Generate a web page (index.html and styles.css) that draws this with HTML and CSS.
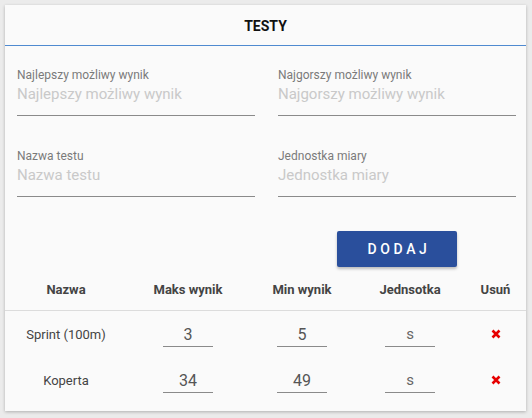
FILE: index.html
```html
<!DOCTYPE html>
<html lang="pl">
<head>
<meta charset="utf-8">
<title>Testy</title>
<link rel="stylesheet" href="styles.css">
</head>
<body>
<div class="card">
  <div class="card-header">TESTY</div>
  <div class="form">
    <div class="field">
      <label class="label">Najlepszy możliwy wynik</label>
      <input class="input" placeholder="Najlepszy możliwy wynik">
    </div>
    <div class="field">
      <label class="label">Najgorszy możliwy wynik</label>
      <input class="input" placeholder="Najgorszy możliwy wynik">
    </div>
    <div class="field">
      <label class="label">Nazwa testu</label>
      <input class="input" placeholder="Nazwa testu">
    </div>
    <div class="field">
      <label class="label">Jednostka miary</label>
      <input class="input" placeholder="Jednostka miary">
    </div>
    <div class="btn-cell">
      <button class="btn">DODAJ</button>
    </div>
  </div>
  <div class="table">
    <div class="row head">
      <div class="cell">Nazwa</div>
      <div class="cell">Maks wynik</div>
      <div class="cell">Min wynik</div>
      <div class="cell">Jednsotka</div>
      <div class="cell">Usuń</div>
    </div>
    <div class="row">
      <div class="cell">Sprint (100m)</div>
      <div class="cell"><input class="small" value="3"></div>
      <div class="cell"><input class="small" value="5"></div>
      <div class="cell"><input class="small unit" value="s"></div>
      <div class="cell"><svg class="del" width="10" height="10" viewBox="0 0 10 10"><path d="M1.5 1.5L8.5 8.5M8.5 1.5L1.5 8.5" stroke="#e60000" stroke-width="2.6" stroke-linecap="butt"/></svg></div>
    </div>
    <div class="row">
      <div class="cell">Koperta</div>
      <div class="cell"><input class="small" value="34"></div>
      <div class="cell"><input class="small" value="49"></div>
      <div class="cell"><input class="small unit" value="s"></div>
      <div class="cell"><svg class="del" width="10" height="10" viewBox="0 0 10 10"><path d="M1.5 1.5L8.5 8.5M8.5 1.5L1.5 8.5" stroke="#e60000" stroke-width="2.6" stroke-linecap="butt"/></svg></div>
    </div>
  </div>
</div>
</body>
</html>
```
FILE: styles.css
```css
html, body {
  margin: 0;
  padding: 0;
}
body {
  background: #ebebeb;
  font-family: Roboto, "Liberation Sans", sans-serif;
  padding: 5px 6px 7px 5px;
}
.card {
  background: #fafafa;
  width: 521px;
  height: 406px;
  box-shadow: 0 1px 3px rgba(0,0,0,0.25);
  box-sizing: border-box;
}
.card-header {
  height: 40px;
  line-height: 42px;
  text-align: center;
  font-weight: 700;
  font-size: 14px;
  color: #111;
  border-bottom: 1px solid #4f8ad0;
}
.form {
  display: grid;
  grid-template-columns: 238px 238px;
  column-gap: 23px;
  row-gap: 32px;
  padding: 21px 0 0 12px;
}
.field {
  display: flex;
  flex-direction: column;
}
.label {
  font-size: 12px;
  line-height: 16px;
  color: #7a7a7a;
}
.input {
  font-family: Roboto, "Liberation Sans", sans-serif;
  font-size: 15px;
  line-height: 20px;
  height: 33px;
  padding: 1px 0 12px 0;
  border: 0;
  border-bottom: 1px solid #8a8a8a;
  background: transparent;
  outline: none;
  box-sizing: border-box;
  color: #333;
}
.input::placeholder {
  color: #c9c9c9;
}
.btn-cell {
  grid-column: 2;
  display: flex;
  justify-content: center;
  margin-top: 2px;
}
.btn {
  width: 120px;
  height: 36px;
  background: #2a4f9c;
  color: #fff;
  border: 0;
  border-radius: 2px;
  font-family: Roboto, "Liberation Sans", sans-serif;
  font-size: 14px;
  font-weight: 500;
  letter-spacing: 3.6px;
  padding: 0 0 0 4px;
  box-shadow: 0 2px 3px rgba(0,0,0,0.25);
}
.table {
  margin-top: 1px;
}
.row {
  display: grid;
  grid-template-columns: 122px 122px 106px 110px 61px;
  height: 46px;
  align-items: center;
  text-align: center;
  font-size: 13px;
  color: #444;
}
.row.head {
  height: 42px;
  font-weight: 700;
  border-bottom: 1px solid #dcdcdc;
}
.cell {
  display: flex;
  justify-content: center;
  align-items: center;
}
.small {
  width: 50px;
  box-sizing: border-box;
  font-family: Roboto, "Liberation Sans", sans-serif;
  font-size: 16px;
  line-height: 20px;
  height: 23px;
  padding: 0 0 2px 0;
  margin-top: 3px;
  text-align: center;
  color: #555;
  border: 0;
  border-bottom: 1px solid #8a8a8a;
  background: transparent;
  outline: none;
}
.small.unit {
  font-size: 15px;
  color: #666;
}
.del {
  display: block;
}
```
